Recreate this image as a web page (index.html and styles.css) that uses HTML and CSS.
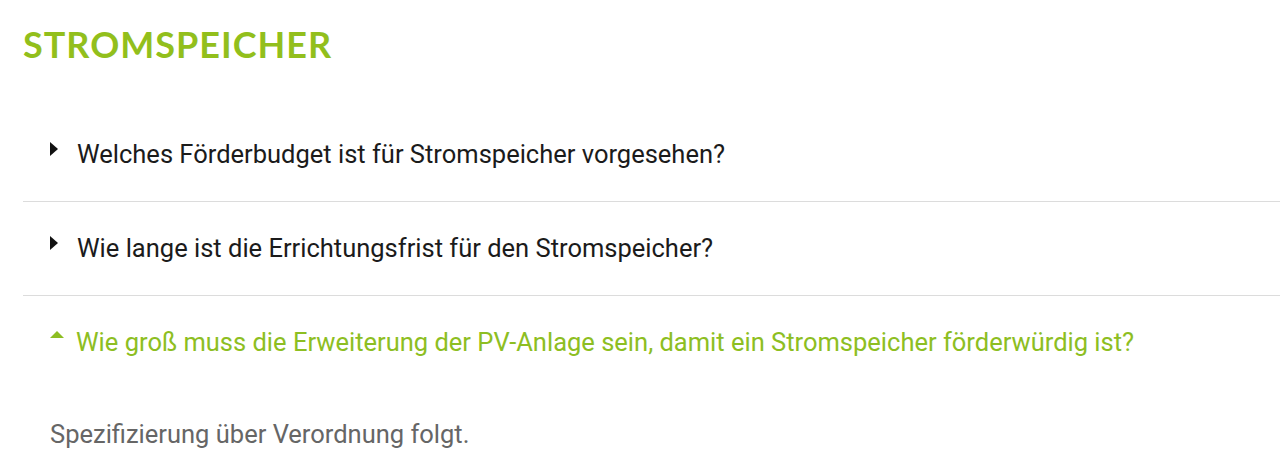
FILE: index.html
```html
<!DOCTYPE html>
<html lang="de">
<head>
<meta charset="utf-8">
<title>Stromspeicher</title>
<link rel="stylesheet" href="styles.css">
</head>
<body>
<section class="faq">
  <h2 class="faq-title">STROMSPEICHER</h2>
  <details class="faq-item">
    <summary class="faq-q"><span class="arrow"></span><span class="q-text">Welches Förderbudget ist für Stromspeicher vorgesehen?</span></summary>
  </details>
  <details class="faq-item">
    <summary class="faq-q"><span class="arrow"></span><span class="q-text">Wie lange ist die Errichtungsfrist für den Stromspeicher?</span></summary>
  </details>
  <details class="faq-item open-item" open>
    <summary class="faq-q"><span class="arrow"></span><span class="q-text">Wie groß muss die Erweiterung der PV-Anlage sein, damit ein Stromspeicher förderwürdig ist?</span></summary>
    <p class="faq-a">Spezifizierung über Verordnung folgt.</p>
  </details>
</section>
</body>
</html>
```

FILE: styles.css
```css
html, body {
  margin: 0;
  padding: 0;
  background: #fff;
  overflow: hidden;
}

.faq {
  padding: 23px 0 0 23px;
  margin-right: -40px;
}

.faq-title {
  margin: 0 0 42px 0;
  font-family: Lato, "Noto Sans", sans-serif;
  font-weight: 700;
  font-size: 36px;
  line-height: 43px;
  color: #92bf1c;
  letter-spacing: 1px;
}

.faq-item {
  border-bottom: 1px solid #dcdcdc;
}

.faq-item.open-item {
  border-bottom: none;
}

.faq-q {
  list-style: none;
  display: flex;
  align-items: center;
  padding: 31px 0 32px 26px;
  font-family: Roboto, "Liberation Sans", sans-serif;
  font-size: 25.5px;
  line-height: 30px;
  color: #1b1b1b;
  cursor: pointer;
}

.faq-q::-webkit-details-marker {
  display: none;
}

.arrow {
  flex: none;
  width: 0;
  height: 0;
  border-top: 7px solid transparent;
  border-bottom: 7px solid transparent;
  border-left: 8px solid #111;
  margin-left: 1px;
  margin-right: 19px;
  position: relative;
  top: -5px;
}

.open-item .faq-q {
  color: #8dbe22;
}

.open-item .arrow {
  border-left: 7px solid transparent;
  border-right: 7px solid transparent;
  border-bottom: 7px solid #8dbe22;
  border-top: none;
  margin-left: 1px;
  margin-right: 12px;
  top: -8px;
}

.faq-a {
  margin: 0;
  padding: 30px 0 0 27px;
  font-family: Roboto, "Liberation Sans", sans-serif;
  font-size: 25.5px;
  line-height: 30px;
  color: #666;
}
```
